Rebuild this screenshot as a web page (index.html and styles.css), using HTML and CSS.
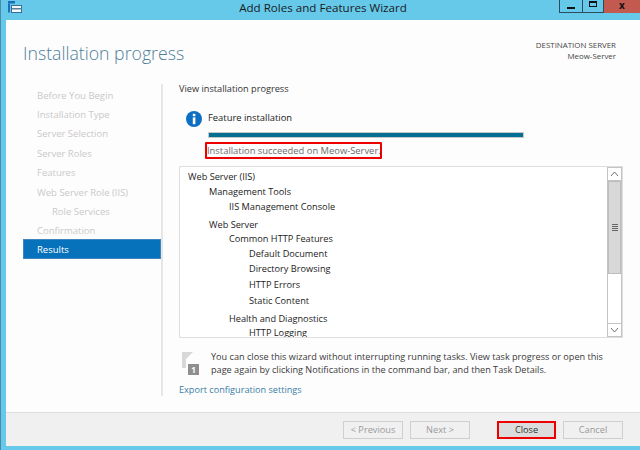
FILE: index.html
```html
<!DOCTYPE html>
<html lang="en">
<head>
<meta charset="utf-8">
<title>Add Roles and Features Wizard</title>
<link rel="stylesheet" href="styles.css">
</head>
<body>
<div class="window">
  <header class="titlebar">
    <svg class="app-icon" width="14" height="12" viewBox="0 0 14 12"><rect x="0" y="0" width="7" height="2.5" fill="#1c6fb8"/><rect x="0" y="2.5" width="2" height="9" fill="#1c6fb8"/><rect x="3.5" y="4.5" width="10" height="7" fill="#f4f8fb" stroke="#3a6f95"/><rect x="3.5" y="7" width="10" height="1.5" fill="#5d7f98"/></svg>
    <div class="title">Add Roles and Features Wizard</div>
    <div class="controls">
      <div class="ctl ctl-min"><span class="min-glyph"></span></div>
      <div class="ctl ctl-max"><span class="max-glyph"></span></div>
      <div class="ctl ctl-close">x</div>
    </div>
  </header>
  <div class="body">
    <div class="head">
      <h1 class="heading">Installation progress</h1>
      <div class="dest">
        <div>DESTINATION SERVER</div>
        <div>Meow-Server</div>
      </div>
    </div>
    <div class="main">
      <nav class="nav">
        <div class="nav-item">Before You Begin</div>
        <div class="nav-item">Installation Type</div>
        <div class="nav-item">Server Selection</div>
        <div class="nav-item">Server Roles</div>
        <div class="nav-item">Features</div>
        <div class="nav-item">Web Server Role (IIS)</div>
        <div class="nav-item nav-sub">Role Services</div>
        <div class="nav-item">Confirmation</div>
        <div class="nav-item nav-active">Results</div>
      </nav>
      <section class="content">
        <div class="view-label">View installation progress</div>
        <div class="feature">
          <svg class="info" width="16" height="16" viewBox="0 0 16 16"><circle cx="8" cy="8" r="8" fill="#0d6fc4"/><rect x="6.8" y="2.8" width="2.6" height="2.4" fill="#fff"/><rect x="6.8" y="6.4" width="2.6" height="6.8" fill="#fff"/></svg>
          <div class="feature-body">
            <div class="feature-label">Feature installation</div>
            <div class="progress"><div class="progress-fill"></div></div>
            <div class="status"><span class="status-text">Installation succeeded on Meow-Server.</span></div>
          </div>
        </div>
        <div class="listbox">
          <div class="list-text">
            <div class="l0">Web Server (IIS)</div>
            <div class="l1 r2">Management Tools</div>
            <div class="l2 r2">IIS Management Console</div>
            <div class="l1 r3">Web Server</div>
            <div class="l2 r6">Common HTTP Features</div>
            <div class="l3 r2">Default Document</div>
            <div class="l3 r4">Directory Browsing</div>
            <div class="l3 r4">HTTP Errors</div>
            <div class="l3 r4">Static Content</div>
            <div class="l2 r7">Health and Diagnostics</div>
            <div class="l3 r5">HTTP Logging</div>
          </div>
          <div class="scrollbar">
            <div class="arrow"><svg width="9" height="6" viewBox="0 0 9 6"><path d="M1 5 L4.5 1 L8 5" fill="none" stroke="#707070"/></svg></div>
            <div class="track"><div class="thumb"><span></span><span></span><span></span><span></span></div></div>
            <div class="arrow arrow-down"><svg width="9" height="6" viewBox="0 0 9 6"><path d="M1 1 L4.5 5 L8 1" fill="none" stroke="#707070"/></svg></div>
          </div>
        </div>
        <div class="note">
          <svg class="flag" width="17" height="23" viewBox="0 0 17 23"><path d="M0 0 H11 L4 7 V16 H0 Z" fill="#d8d8d8"/><rect x="6" y="12" width="11" height="11" fill="#8f8f8f"/><text x="11.5" y="21" class="flag-num">1</text></svg>
          <p class="note-text">You can close this wizard without interrupting running tasks. View task progress or open this page again by clicking Notifications in the command bar, and then Task Details.</p>
        </div>
        <div class="export">Export configuration settings</div>
      </section>
    </div>
    <footer class="footer">
      <div class="btn btn-off">&lt; Previous</div>
      <div class="btn btn-off">Next &gt;</div>
      <div class="btn btn-close">Close</div>
      <div class="btn btn-off">Cancel</div>
    </footer>
  </div>
</div>
</body>
</html>
```
FILE: styles.css
```css
* { box-sizing: border-box; }
html, body { margin: 0; padding: 0; }
body { width: 640px; height: 450px; overflow: hidden; font-family: "Open Sans", "Liberation Sans", sans-serif; background: #66c9ea; }
.window { width: 640px; height: 450px; display: flex; flex-direction: column; padding: 0 0 4px 5px; background: #66c9ea; border-left: 1px solid #4a8aa8; }
.titlebar { height: 20px; margin: 0 0 0 -6px; display: flex; align-items: flex-start; position: relative; flex: none; }
.app-icon { position: absolute; left: 8px; top: 1px; }
.title { width: 100%; text-align: center; font-size: 11.6px; line-height: 15px; color: #1a1a1a; padding-left: 6px; }
.controls { position: absolute; right: 0; top: 0; display: flex; height: 13px; }
.ctl { height: 13px; border: 1px solid #2c4b5c; border-top: 0; display: flex; align-items: center; justify-content: center; }
.ctl-min { width: 24px; }
.ctl-max { width: 21px; border-left: 0; }
.ctl-close { width: 36px; background: #c25a50; border: 0; color: #111; font-size: 10px; font-weight: 700; line-height: 10px; align-items: flex-start; }
.min-glyph { width: 8px; height: 2px; background: #111; margin-top: 3px; }
.max-glyph { width: 8px; height: 6px; border: 1px solid #111; border-top-width: 2px; margin-top: -4px; }
.body { flex: 1; background: #fdfdfd; display: flex; flex-direction: column; min-height: 0; }
.head { height: 64px; display: flex; justify-content: space-between; flex: none; padding: 20px 24px 0 17px; }
.heading { margin: 0; font-size: 17.7px; line-height: 26px; font-weight: 300; color: #4f7e99; }
.dest { text-align: right; font-size: 7.9px; line-height: 11px; color: #444; }
.main { flex: 1; display: flex; min-height: 0; }
.nav { width: 138px; margin-left: 17px; flex: none; display: flex; flex-direction: column; padding-top: 1.6px; }
.nav-item { height: 19.4px; line-height: 19px; font-size: 9.5px; color: #c9c9c9; padding-left: 14px; flex: none; }
.nav-sub { padding-left: 29px; }
.nav-active { background: #0672bb; color: #fff; height: 20px; margin-top: -1.5px; border: 1px solid #3f86c0; padding-left: 13px; line-height: 19px; }
.content { flex: 1; border-left: 2px solid #e6e6e6; height: 312px; padding: 0 0 0 16px; display: flex; flex-direction: column; }
.view-label { font-size: 9.2px; line-height: 12px; color: #333; margin-top: -1px; height: 24px; flex: none; }
.feature { display: flex; height: 59px; padding-left: 7px; flex: none; }
.info { flex: none; margin-top: 4px; }
.feature-body { margin-left: 6px; }
.feature-label { font-size: 9.4px; line-height: 12px; color: #222; height: 20px; margin-top: 5px; }
.progress { width: 316px; height: 6px; background: #c9c9c9; padding: 1px; }
.progress-fill { width: 100%; height: 4px; background: #036f92; }
.status { margin: 4px 0 0 -3px; width: 177px; height: 17px; border: 2px solid #ee0000; border-radius: 1px; }
.status-text { font-size: 9.4px; line-height: 13px; display: block; color: #6d6d6d; white-space: nowrap; }
.listbox { width: 444px; height: 172px; border: 1px solid #dedede; display: flex; flex: none; background: #fff; }
.list-text { flex: 1; font-size: 9.2px; color: #1c1c1c; padding: 3px 0 0 8px; overflow: hidden; font-weight: 500; }
.l0 { line-height: 14px; }
.l1 { padding-left: 21px; }
.l2 { padding-left: 41px; }
.l3 { padding-left: 61px; }
.r2 { line-height: 15px; }
.r3 { line-height: 15px; margin-top: 3px; }
.r4 { line-height: 16px; }
.r5 { line-height: 13px; }
.r6 { line-height: 14px; }
.r7 { line-height: 15px; margin-top: 2px; }
.scrollbar { width: 15px; display: flex; flex-direction: column; flex: none; background: #fff; border: 1px solid #c4c4c4; border-width: 0 1px; }
.arrow { height: 14px; flex: none; display: flex; align-items: center; justify-content: center; background: #fff; border-bottom: 1px solid #c4c4c4; border-top: 1px solid #c4c4c4; }
.track { flex: 1; background: #fff; }
.thumb { height: 93px; background: #d8d8d8; border: 1px solid #bdbdbd; display: flex; flex-direction: column; align-items: center; justify-content: center; gap: 1px; }
.thumb span { width: 6px; height: 1px; background: #666; }
.note { display: flex; margin-top: 12px; padding-left: 3px; height: 33px; flex: none; }
.flag { flex: none; margin-top: 2px; }
.flag-num { font-size: 8px; font-weight: 700; fill: #fff; text-anchor: middle; }
.note-text { margin: 0 0 0 12px; font-size: 9.15px; line-height: 13px; color: #3a3a3a; width: 400px; }
.export { font-size: 9.15px; line-height: 12px; color: #3b7ea6; margin-top: 1px; }
.footer { height: 34px; flex: none; background: #f0f0f0; border-top: 1px solid #dcdcdc; display: flex; align-items: flex-start; justify-content: flex-end; padding: 8px 17px 0 0; gap: 7px; }
.btn { width: 60px; height: 18px; border: 1px solid #cfcfcf; font-size: 9.2px; line-height: 16px; text-align: center; color: #9a9a9a; flex: none; }
.btn-close { width: 59px; margin-left: 20px; border: 2px solid #ee0000; background: #dcdcdc; color: #333; line-height: 14px; }
```
